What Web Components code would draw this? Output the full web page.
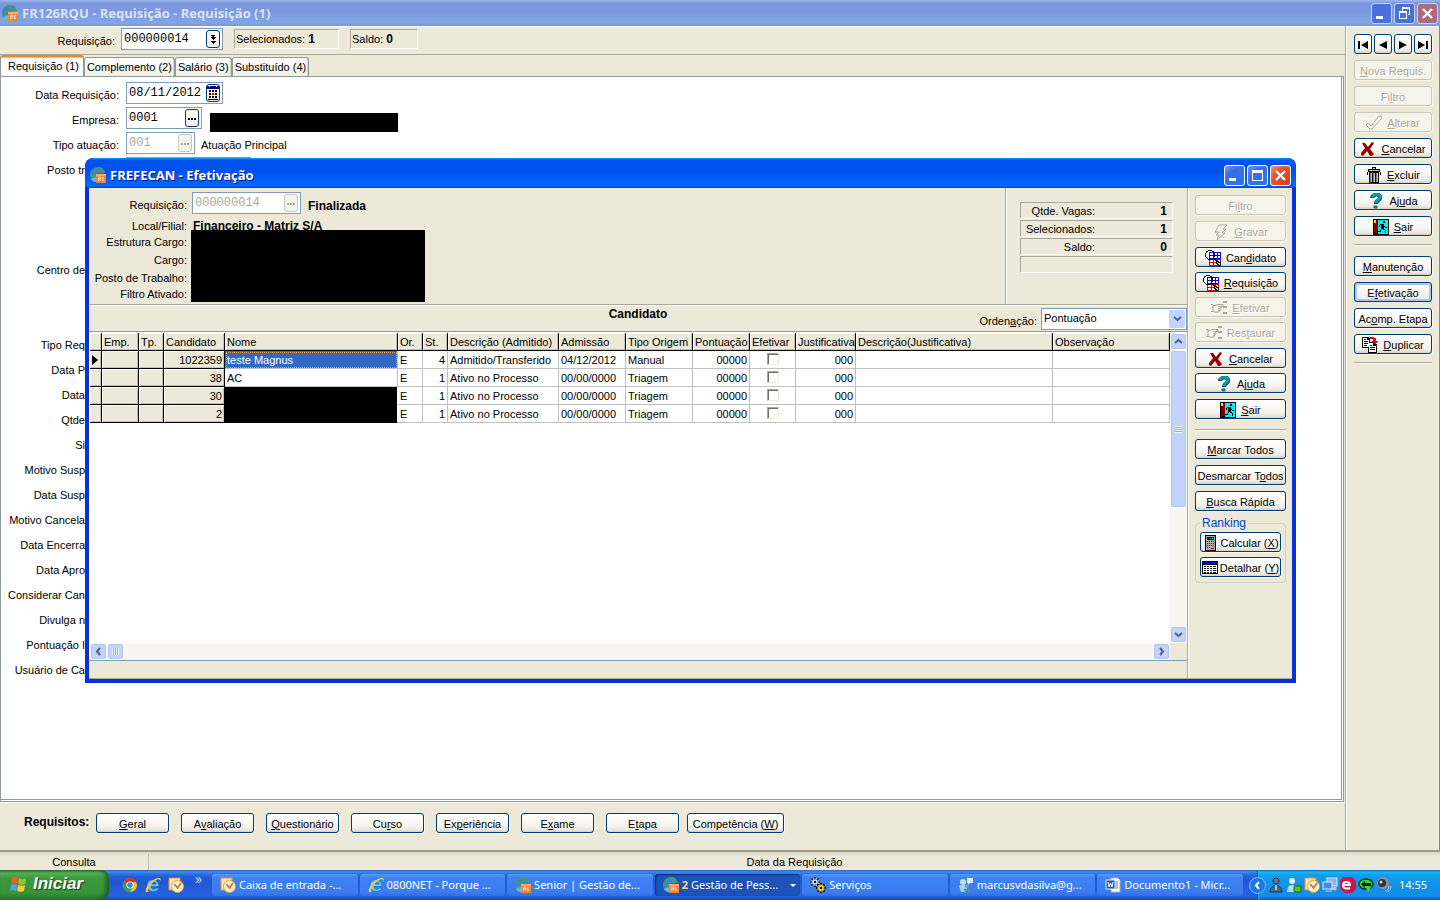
<!DOCTYPE html>
<html lang="pt-BR">
<head>
<meta charset="utf-8">
<title>FR126RQU - Requisição</title>
<style>
    html, body {
        height: 100%;
    }
    body {
        margin: 0;
        display: flex;
        flex-direction: column;
        overflow: hidden;
        background: #ece9d8;
        color: #000;
        font: 11px/14px "Liberation Sans", Arial, sans-serif;
        --face: #ece9d8;
        --edge: #7f9db9;
        --ui: "Noto Sans", Tahoma, sans-serif;
        --caption: "Open Sans", "Trebuchet MS", sans-serif;
    }
    .workspace {
        flex: 1;
        display: flex;
        min-height: 0;
        border-right: 1px solid #8c8a80;
    }
    .main {
        flex: 1;
        display: flex;
        flex-direction: column;
        min-width: 0;
        border-right: 1px solid #aca899;
    }
</style>
</head>
<body>
    <title-bar caption="FR126RQU - Requisição - Requisição (1)" inactive></title-bar>
    <div class="workspace">
        <div class="main">
            <request-header></request-header>
            <tab-strip></tab-strip>
            <request-form></request-form>
            <requirement-bar></requirement-bar>
        </div>
        <request-actions></request-actions>
    </div>
    <status-line></status-line>
    <task-bar></task-bar>
    <hiring-window></hiring-window>

<script>
const ICONS = {
    senior: `<svg viewBox="0 0 16 16"><path d="M0 8C0 3 4 0 8 0c4 0 6 2 7 6H6v9C2 14 0 11 0 8z" fill="#3f9c84"/><path d="M0 8c4-4 9-4 15-2l-9 1C4 8 2 9 1 11zM2 3c3-2 8-2 11 0L7 4 1 6z" fill="#4284b8" opacity=".8"/><path d="M1 12l5-2v5c-3 0-4-1-5-3z" fill="#6cb8cc"/><rect x="6" y="7" width="10" height="9" fill="#f08438"/><rect x="6" y="7" width="10" height="2" fill="#fca868"/><path d="M8.500 14v-4h2v2h-2m1 0l1 2M14 10.500h-2V12h1.500v1.500H12" stroke="#ffe2c4" stroke-width=".8" fill="none"/></svg>`,
    check: `<svg viewBox="0 0 16 16"><path d="M0 10l2-2 3 3 8-10h3v2L6 14H4z" fill="#f5f4ea" stroke="#aca899"/></svg>`,
    cross: `<svg viewBox="0 0 16 16"><path d="M2 2h3l3 4 4-5 2 1-4 6 4 5-2 2h-2l-3-5-4 5-2-1v-2l4-5z" fill="#a00000"/><path d="M3 3l5 6 4 5M12 3L4 12" stroke="#700000" stroke-width="1" fill="none"/></svg>`,
    trash: `<svg viewBox="0 0 16 16" shape-rendering="crispEdges"><path d="M6 0h4v2H6zM2 2h12v3H2zM3 5h10v11H3z" fill="#000"/><path d="M7 1h2v1H7zM3 3h10v1H3z" fill="#c0c0c0"/><path d="M4 6h1v9H4zM7 6h1v9H7zM10 6h1v9h-1z" fill="#808080"/><path d="M5 6h1v9H5zM8 6h1v9H8zM11 6h1v9h-1z" fill="#c0c0c0"/><path d="M1 5h1v3H1zM14 5h1v3h-1z" fill="#000"/></svg>`,
    help: `<svg viewBox="0 0 16 16"><path d="M4 5C4 1 13 0 12 5c0 3-4 2-4 6" stroke="#005060" stroke-width="4" fill="none"/><path d="M4 4C5 1 12 0 12 4c0 3-4 3-4 6" stroke="#00a6b4" stroke-width="2.500" fill="none"/><path d="M6 13h3v2H6z" fill="#00a6b4" stroke="#005060" stroke-width=".8"/></svg>`,
    exit: `<svg viewBox="0 0 16 16" shape-rendering="crispEdges"><rect width="16" height="16" fill="#000"/><rect x="5" y="1" width="10" height="14" fill="#00f0f0"/><path d="M1 1h4v12l-4 2z" fill="#800000"/><path d="M1 1h2v3H1z" fill="#ffe000"/><path d="M10 2h2v2h-2zM7 5h4v1H7zM6 6h1v2H6zM8 6h3v4H8zM11 7h1v1h-1zM12 8h2v1h-2zM10 10h2v1h-2zM12 11h1v3h-1zM8 10h1v1H8zM7 11h1v2H7zM5 12h2v1H5z" fill="#000"/></svg>`,
    duplicate: `<svg viewBox="0 0 16 16" shape-rendering="crispEdges"><path d="M0 0h6l2 2v9H0zM6 5h6l3 3v8H6z" fill="#000"/><path d="M1 1h4v2h2v7H1zM7 6h4v3h3v6H7z" fill="#fff"/><path d="M2 2h2v1H2zM2 4h4v1H2zM2 6h4v1H2zM2 8h3v1H2zM8 8h2v1H8zM8 10h5v1H8zM8 12h5v1H8z" fill="#000"/><path d="M8 0h4v1h2v3h2l-3 4-4-4h2V2H8z" fill="#f00000"/></svg>`,
    bolt: `<svg viewBox="0 0 16 16"><path d="M6 1h8l-4 4h3L9 9h3l-8 7 2-5H3l3-3H2z" fill="#f5f4ea" stroke="#aca899"/></svg>`,
    search: `<svg viewBox="0 0 16 16" shape-rendering="crispEdges"><rect x="4" y="2" width="12" height="7" fill="#0000f0"/><rect x="4" y="9" width="12" height="7" fill="#f00000"/><path d="M5 3h3v2H5zM9 3h3v2H9zM13 3h2v2h-2zM5 6h3v2H5zM9 6h3v2H9zM13 6h2v2h-2zM5 10h3v2H5zM9 10h3v2H9zM13 10h2v2h-2zM5 13h3v2H5zM9 13h3v2H9zM13 13h2v2h-2z" fill="#fff"/><path d="M3 0h4v1H3zM1 1h2v1H1zM7 1h2v1H7zM0 3h1v4H0zM9 3h1v4H9zM1 7h1v1H1zM8 7h1v1H8zM3 9h4v1H3zM1 2h1v1H1zM8 2h1v1H8zM2 8h1v1H2zM8 8h3v2H8zM10 10h2v1h-2zM11 11h3v1h2v4h-3v-1h-1v-1h-1z" fill="#000"/><path d="M12 12h1v1h-1zM13 13h2v1h-2zM14 14h1v1h-1z" fill="#e8e060"/></svg>`,
    hand: `<svg viewBox="0 0 16 16"><path d="M0 4.500h2v7H0m2-6h2l2-1h6v2H7m3 0v2H7m2 0v2H7m1 0v1.500H3l-1-1" fill="none" stroke="#aca899"/><path d="M12 1h4v2h-4zM12 6h4v2h-4zM12 12h4v2h-4z" fill="#aca899"/></svg>`,
    calculator: `<svg viewBox="0 0 16 16" shape-rendering="crispEdges"><rect x="3" width="11" height="16" fill="#000"/><rect x="4" y="1" width="9" height="14" fill="#a8a8a8"/><rect x="5" y="2" width="7" height="3" fill="#000"/><path d="M8 3h1v1H8zM10 3h1v1h-1z" fill="#00e0c0"/><path d="M5 6h1v1H5zM7 6h1v1H7zM9 6h1v1H9zM11 6h1v1h-1zM5 8h1v1H5zM7 8h1v1H7zM9 8h1v1H9zM11 8h1v1h-1zM5 10h1v1H5zM7 10h1v1H7zM9 10h1v1H9zM11 10h1v1h-1zM5 12h1v1H5zM7 12h1v1H7z" fill="#303030"/><path d="M9 13h3v1H9z" fill="#e00000"/></svg>`,
    table: `<svg viewBox="0 0 16 16" shape-rendering="crispEdges"><rect y="1" width="16" height="13" fill="#000"/><rect x="1" y="2" width="14" height="2" fill="#0000e0"/><rect x="1" y="5" width="14" height="8" fill="#fff"/><path d="M2 6h2v1H2zM5 6h2v1H5zM8 6h2v1H8zM11 6h3v1h-3zM2 8h2v1H2zM5 8h2v1H5zM8 8h2v1H8zM11 8h3v1h-3zM2 10h2v1H2zM5 10h2v1H5zM8 10h2v1H8zM11 10h3v1h-3zM2 12h2v1H2zM5 12h2v1H5zM8 12h2v1H8zM11 12h3v1h-3z" fill="#202020"/></svg>`,
    first: `<svg viewBox="0 0 12 12"><path d="M1 2h2v8H1zM11 2v8L4 6z"/></svg>`,
    prev: `<svg viewBox="0 0 12 12"><path d="M10 2v8L2 6z"/></svg>`,
    next: `<svg viewBox="0 0 12 12"><path d="M2 2v8l8-4z"/></svg>`,
    last: `<svg viewBox="0 0 12 12"><path d="M9 2h2v8H9zM1 2v8l7-4z"/></svg>`,
    dots: `<svg viewBox="0 0 12 16" shape-rendering="crispEdges"><path d="M2 8h2v2H2zM5 8h2v2H5zM8 8h2v2H8z" fill="currentColor"/></svg>`,
    drop: `<svg viewBox="0 0 12 16" shape-rendering="crispEdges"><path d="M4 4h4v1H4zM5 5h2v1H5zM4 6h5v1H4zM5 7h3v1H5zM6 8h1v1H6zM4 10h5v1H4zM5 11h3v1H5zM6 12h1v1H6z"/></svg>`,
    calendar: `<svg viewBox="0 0 12 16" shape-rendering="crispEdges"><path d="M0 1h12v3H0z" fill="#000080"/><path d="M2 1h1v1H2zM9 1h1v1H9z" fill="#fff"/><path d="M2 5h2v2H2zM5 5h2v2H5zM8 5h2v2H8zM2 8h2v2H2zM8 8h2v2H8zM2 11h2v2H2zM5 11h2v2H5zM8 11h2v2H8zM1 14h10v1H1z" fill="#000"/><path d="M5 8h2v2H5z" fill="#e00000"/></svg>`,
    chrome: `<svg viewBox="0 0 16 16"><circle cx="8" cy="8" r="7" fill="#f5c518"/><path d="M8 8L2 4.500A7 7 0 0 1 14.500 5H8z" fill="#d93025"/><path d="M2 4.500A7 7 0 0 0 8 15l3-5-3-2z" fill="#34a040"/><circle cx="8" cy="8" r="3.600" fill="#fff"/><circle cx="8" cy="8" r="2.700" fill="#3f83e8"/></svg>`,
    ie: `<svg viewBox="0 0 16 16"><path d="M14 9.500H6c0 3 4 3.500 5 1.500h3c-1 5-12 5-12-2.500S14 .500 14 9.500zM6 7h5c0-3-5-3-5 0z" fill="#6cc8fa" stroke="#1560b8" stroke-width=".6" fill-rule="evenodd"/><path d="M1 15C-1 11 8 1 14 1c2 0 2 2 1 3 0-4-6 0-9 4s-4 6-2 6c-1 1-2 1.500-3 1z" fill="#f8c83c"/></svg>`,
    outlook: `<svg viewBox="0 0 16 16"><path d="M1 1h11v12H1z" fill="#fbe3b4" stroke="#e8902c"/><circle cx="9.500" cy="9.500" r="6" fill="#fff0c4" stroke="#e3a23c"/><path d="M6.500 7l3 4 3.500-5" fill="none" stroke="#b8742c" stroke-width="1.500"/></svg>`,
    gears: `<svg viewBox="0 0 16 16"><circle cx="5" cy="5" r="3.800" fill="#e4e4e4"/><path d="M5 0v10M0 5h10M1.500 1.500l7 7M8.500 1.500l-7 7" stroke="#000" stroke-width="1.200"/><circle cx="5" cy="5" r="3" fill="#e4e4e4" stroke="#888"/><circle cx="5" cy="5" r="1.200"/><path d="M11 6v10M6 11h10M7.500 7.500l7 7M14.500 7.500l-7 7" stroke="#000" stroke-width="2"/><circle cx="11" cy="11" r="3.500" fill="#f8e020" stroke="#706000" stroke-width=".8"/><circle cx="11" cy="11" r="1.300"/></svg>`,
    people: `<svg viewBox="0 0 16 16"><path d="M9 1h6v5h-3l-2 2V6H9z" fill="#eaf4fc"/><circle cx="5" cy="5" r="3" fill="#bfe4f0"/><path d="M1 9c2-2 6-2 8 0v6H3z" fill="#a4d4e0"/><circle cx="9" cy="9" r="2" fill="#5fa4ba"/><path d="M6 12h6l-1 4H7z" fill="#4c90aa"/></svg>`,
    word: `<svg viewBox="0 0 16 16"><path d="M6 1h7l2 2v12H6z" fill="#fff" stroke="#9bb0d0"/><path d="M8 5h5M8 7h5M8 9h5M8 11h5" stroke="#5878b0"/><rect x="1" y="3" width="9" height="9" fill="#2e57a8" stroke="#dce8fa"/><path d="M3 5l1 5 1.500-4L7 10l1-5" fill="none" stroke="#fff"/></svg>`,
    flag: `<svg viewBox="0 0 18 18"><path d="M2 3c2-2 4-1 6 0L7 9C5 8 3 8 1 9z" fill="#f0602c"/><path d="M9 3c3 2 5 1 7 0l-1 6c-2 1-4 1-7 0z" fill="#8cc83c"/><path d="M1 10c2-1 4-1 6 0l-1 6c-2-1-4-1-6 0z" fill="#5c9cf4"/><path d="M8 10c3 1 5 1 7 0l-1 6c-2 1-4 1-7 0z" fill="#fccc30"/></svg>`,
    person: `<svg viewBox="0 0 16 16"><circle cx="8" cy="4" r="3" fill="#5a7894" stroke="#203850"/><path d="M2 15c0-4 3-6 6-7 3 1 6 3 6 7z" fill="#46688c" stroke="#203850"/><path d="M7 8h2v5H7z" fill="#b0c4d8"/></svg>`,
    online: `<svg viewBox="0 0 16 16"><circle cx="6" cy="4" r="3" fill="#e8f4fc"/><path d="M1 15c0-6 3-7 5-7s5 1 5 7z" fill="#b4dcf4"/><rect x="8" y="9" width="7" height="6" rx="1" fill="#50c818" stroke="#186808"/></svg>`,
    network: `<svg viewBox="0 0 16 16"><rect x="5" y="1" width="10" height="8" fill="#80b4f0" stroke="#dceafa"/><rect x="1" y="5" width="9" height="7" fill="#4888e0" stroke="#dceafa"/><path d="M3 14h7M8 12l6-2v3z" stroke="#c0c8d4" fill="#c0c8d4"/></svg>`,
    antivirus: `<svg viewBox="0 0 16 16"><path d="M3 0h9l4 4v8l-4 4H5l-5-4V4z" fill="#c81850"/><path d="M3 8h7c0-4-7-4-7 0s4 4 7 3" stroke="#fff" stroke-width="2" fill="none"/></svg>`,
    sync: `<svg viewBox="0 0 16 16"><ellipse cx="8" cy="7" rx="7" ry="5" fill="#38d838" stroke="#083808" stroke-width="1.500"/><path d="M3 7l4-3v2h6v3H7v2z" fill="#082808"/><path d="M8 10h5l-3 6z" fill="#38d838"/></svg>`,
    volume: `<svg viewBox="0 0 16 16"><circle cx="7" cy="6" r="6" fill="#8c9098"/><circle cx="6" cy="6" r="4" fill="#303438"/><circle cx="5" cy="5" r="1.500" fill="#d0d4d8"/><path d="M11 15c3-1 4-3 4-6M9 14c2 0 4-2 4-5" stroke="#a8c8f4" fill="none"/></svg>`,
    min: `<svg viewBox="0 0 19 19"><path d="M4 12h7v3H4z" fill="#fff"/></svg>`,
    max: `<svg viewBox="0 0 19 19"><path d="M4 4h11v11H4zm1 3v7h9V7z" fill="#fff" fill-rule="evenodd"/></svg>`,
    restore: `<svg viewBox="0 0 19 19"><path d="M7 3h8v8h-2v-1h1V5H8v2H7zM4 7h8v8H4zm1 2v5h6V9z" fill="#fff" fill-rule="evenodd"/></svg>`,
    close: `<svg viewBox="0 0 19 19"><path d="M5 5l9 9M14 5l-9 9" stroke="#fff" stroke-width="2.400"/></svg>`,
    up: `<svg viewBox="0 0 9 9"><path d="M1 6l3.500-3L8 6" stroke="#4d6185" stroke-width="2" fill="none"/></svg>`,
    down: `<svg viewBox="0 0 9 9"><path d="M1 3l3.500 3L8 3" stroke="#4d6185" stroke-width="2" fill="none"/></svg>`,
    left: `<svg viewBox="0 0 9 9"><path d="M6 1L3 4.500 6 8" stroke="#4d6185" stroke-width="2" fill="none"/></svg>`,
    right: `<svg viewBox="0 0 9 9"><path d="M3 1l3 3.500L3 8" stroke="#4d6185" stroke-width="2" fill="none"/></svg>`
};

// every element renders its own markup once
class View extends HTMLElement {
    constructor() {
        super();
        this.attachShadow({mode: "open"});
    }
    connectedCallback() {
        this.shadowRoot.innerHTML = this.render();
    }
}

class XpIcon extends View {
    render() {
        return `
        <style>
            :host { display: block; flex: none; width: 16px; height: 16px; }
            svg { display: block; width: 100%; height: 100%; }
        </style>
        ${ICONS[this.getAttribute("name")]}`;
    }
}
customElements.define("xp-icon", XpIcon);

class XpButton extends View {
    render() {
        const icon = this.getAttribute("icon");
        const label = this.getAttribute("label");
        return `
        <style>
            :host { display: block; min-width: 0; }
            button {
                display: flex;
                align-items: center;
                justify-content: center;
                gap: var(--icon-gap, 5px);
                width: 100%;
                height: 20px;
                padding: 1px 0 0;
                box-sizing: border-box;
                border: 1px solid #003c74;
                border-radius: 3px;
                background: linear-gradient(#fff, #f6f5f0 60%, #ecebe5 85%, #d6d0c5);
                box-shadow: 1px 1px 0 #f8f6ee;
                font: inherit;
                color: #000;
                white-space: nowrap;
            }
            button:disabled {
                border-color: #c9c7ba;
                background: #f5f4ea;
                color: #aca899;
                text-shadow: 1px 1px 0 #fff;
            }
            :host([current]) button {
                box-shadow: inset 0 0 0 2px #a9c3f5;
            }
            :host([glyph]) xp-icon { width: 12px; height: 12px; }
        </style>
        <button type="button" ${this.hasAttribute("disabled") ? "disabled" : ""} ${label ? `aria-label="${label}"` : ""}>
            ${icon ? `<xp-icon name="${icon}"></xp-icon>` : ""}
            ${label ? "" : "<span><slot></slot></span>"}
        </button>`;
    }
}
customElements.define("xp-button", XpButton);

// text box with a small picker button at its right end
class XpField extends View {
    render() {
        const off = this.hasAttribute("disabled") ? "disabled" : "";
        return `
        <style>
            :host { display: block; }
            .box {
                display: flex;
                align-items: center;
                height: 22px;
                box-sizing: border-box;
                padding: 0 2px;
                border: 1px solid var(--edge);
                background: #fff;
            }
            input {
                flex: 1;
                min-width: 0;
                height: 16px;
                padding: 0;
                border: 0;
                background: none;
                color: #000;
                font: 12px/16px "Liberation Mono", "Courier New", monospace;
            }
            input:disabled { color: #aca899; }
            button {
                width: 14px;
                height: 18px;
                padding: 0;
                border: 1px solid #003c74;
                border-radius: 3px;
                background: linear-gradient(#fff, #ecebe5);
                color: #000;
            }
            button:disabled { border-color: #c9c7ba; background: #f5f4ea; color: #aca899; }
            xp-icon { width: 12px; height: 16px; }
        </style>
        <div class="box">
            <input type="text" value="${this.getAttribute("value") || ""}" aria-label="${this.getAttribute("label")}" ${off}>
            <button type="button" aria-label="Pesquisar" ${off}><xp-icon name="${this.getAttribute("picker") || "dots"}"></xp-icon></button>
        </div>`;
    }
}
customElements.define("xp-field", XpField);

class TitleBar extends View {
    render() {
        const inactive = this.hasAttribute("inactive");
        return `
        <style>
            :host {
                display: flex;
                align-items: center;
                gap: 4px;
                height: 26px;
                flex: none;
                box-sizing: border-box;
                padding: 0 2px;
                background: linear-gradient(#0997ff 0, #0053ee 8%, #0050ee 40%, #0066ff 88%, #0066ff 93%, #003dd7);
                color: #fff;
            }
            :host(:not([inactive])) {
                height: 30px;
                padding: 4px 5px 0;
                border-radius: 7px 7px 0 0;
                text-shadow: 1px 1px 0 #0f1089;
            }
            :host([inactive]) {
                background: linear-gradient(#9db9eb 0, #7a96df 12%, #7b98e0 40%, #82a5e4 88%, #7994dc);
                color: #d8e4f8;
            }
            h1 {
                flex: 1;
                margin: 0;
                font: bold 13px/18px var(--caption);
                white-space: nowrap;
            }
            .buttons { display: flex; gap: 2px; }
            button {
                width: 21px;
                height: 21px;
                padding: 0;
                border: 1px solid #fff;
                border-radius: 3px;
                background: radial-gradient(circle at 80% 80%, #2b75f0, #3a6be8 60%, #7b9df4);
            }
            .close { background: radial-gradient(circle at 80% 80%, #d8401c, #e0532f 60%, #f0a08a); }
            :host([inactive]) button { border-color: #c4d4f4; background: #4a70dc; }
            :host([inactive]) .close { background: #b06a80; }
            button xp-icon { width: 19px; height: 19px; }
        </style>
        <xp-icon name="senior"></xp-icon>
        <h1>${this.getAttribute("caption")}</h1>
        <div class="buttons">
            <button type="button" aria-label="Minimizar"><xp-icon name="min"></xp-icon></button>
            <button type="button" aria-label="Restaurar"><xp-icon name="${inactive ? "restore" : "max"}"></xp-icon></button>
            <button type="button" class="close" aria-label="Fechar"><xp-icon name="close"></xp-icon></button>
        </div>`;
    }
}
customElements.define("title-bar", TitleBar);

class RequestHeader extends View {
    render() {
        return `
        <style>
            :host {
                display: flex;
                align-items: center;
                height: 29px;
                flex: none;
                box-sizing: border-box;
                padding-bottom: 3px;
                border-top: 1px solid #fff;
                border-bottom: 1px solid #aca899;
            }
            .name { width: 115px; padding-top: 3px; margin-right: 6px; text-align: right; }
            xp-field { width: 102px; margin-right: 11px; }
            .sunken {
                box-sizing: border-box;
                width: 105px;
                height: 20px;
                margin-right: 11px;
                padding: 2px 1px;
                border: 1px solid;
                border-color: #aca899 #fff #fff #aca899;
            }
            .short { width: 68px; }
            b { font-size: 12px; }
        </style>
        <span class="name">Requisição:</span>
        <xp-field label="Requisição" value="000000014" picker="drop"></xp-field>
        <div class="sunken">Selecionados: <b>1</b></div>
        <div class="sunken short">Saldo: <b>0</b></div>`;
    }
}
customElements.define("request-header", RequestHeader);

class TabStrip extends View {
    render() {
        return `
        <style>
            :host {
                display: flex;
                align-items: flex-end;
                height: 21px;
                flex: none;
            }
            button {
                height: 19px;
                padding: 0 2px;
                border: 1px solid #919b9c;
                border-bottom: 0;
                border-radius: 3px 3px 0 0;
                background: linear-gradient(#fff, #f0efe6);
                font: inherit;
                color: #000;
                box-shadow: inset -1px 0 0 #d0cec0;
            }
            .on {
                height: 21px;
                padding: 0 4px 2px 7px;
                border-top: 2px solid #e68b2c;
                background: #fcfcfe;
                box-shadow: inset 0 1px 0 #ffc73c;
            }
        </style>
        <button type="button" class="on">Requisição (1)</button>
        <button type="button">Complemento (2)</button>
        <button type="button">Salário (3)</button>
        <button type="button">Substituído (4)</button>`;
    }
}
customElements.define("tab-strip", TabStrip);

const FORM_LABELS = {
    4: "Posto tr", 8: "Centro de", 11: "Tipo Req", 12: "Data P", 13: "Data", 14: "Qtde", 15: "Si",
    16: "Motivo Susp", 17: "Data Susp", 18: "Motivo Cancela", 19: "Data Encerra", 20: "Data Apro",
    21: "Considerar Can", 22: "Divulga n", 23: "Pontuação I", 24: "Usuário de Ca"
};

class RequestForm extends View {
    render() {
        const labels = Object.entries(FORM_LABELS)
            .map(([row, text]) => `<span class="cut" style="grid-row: ${row}">${text}</span>`).join("");
        return `
        <style>
            :host {
                display: grid;
                grid-template-columns: 118px 1fr;
                grid-auto-rows: 25px;
                column-gap: 7px;
                flex: 1;
                min-height: 0;
                box-sizing: border-box;
                padding-top: 5px;
                margin-right: 1px;
                border: 1px solid #919b9c;
                border-right: 3px double #919b9c;
                border-bottom: 3px double #919b9c;
                background: #fff;
            }
            span { line-height: 25px; padding-top: 1px; white-space: nowrap; }
            .name, .cut { grid-column: 1; text-align: right; }
            .cut { padding-right: 34px; }
            .value { grid-column: 2; display: flex; gap: 6px; }
            .date { width: 97px; }
            .company { width: 76px; }
            .kind { width: 69px; }
            .post { width: 125px; }
            .mask { width: 188px; height: 19px; margin: 6px 0 0 2px; background: #000; }
        </style>
        <span class="name">Data Requisição:</span>
        <div class="value"><xp-field class="date" label="Data Requisição" value="08/11/2012" picker="calendar"></xp-field></div>
        <span class="name">Empresa:</span>
        <div class="value"><xp-field class="company" label="Empresa" value="0001"></xp-field><div class="mask"></div></div>
        <span class="name">Tipo atuação:</span>
        <div class="value"><xp-field class="kind" label="Tipo atuação" value="001" disabled></xp-field><span>Atuação Principal</span></div>
        ${labels}
        <div class="value" style="grid-row: 4"><xp-field class="post" label="Posto"></xp-field></div>`;
    }
}
customElements.define("request-form", RequestForm);

class RequirementBar extends View {
    render() {
        return `
        <style>
            :host {
                display: flex;
                align-items: flex-start;
                gap: 8px;
                height: 48px;
                flex: none;
                box-sizing: border-box;
                padding: 10px 24px 0;
                border-top: 1px solid #fff;
            }
            .group { display: flex; gap: 12px; }
            b { width: 60px; font-size: 12px; line-height: 18px; white-space: nowrap; }
            xp-button { width: 73px; }
            .wide { width: 97px; }
        </style>
        <div class="group">
            <b>Requisitos:</b>
            <xp-button><u>G</u>eral</xp-button>
            <xp-button>A<u>v</u>aliação</xp-button>
            <xp-button><u>Q</u>uestionário</xp-button>
            <xp-button>Cu<u>r</u>so</xp-button>
            <xp-button>Ex<u>p</u>eriência</xp-button>
            <xp-button>E<u>x</u>ame</xp-button>
            <xp-button>E<u>t</u>apa</xp-button>
        </div>
        <xp-button class="wide">Competência (<u>W</u>)</xp-button>`;
    }
}
customElements.define("requirement-bar", RequirementBar);

class RequestActions extends View {
    render() {
        return `
        <style>
            :host {
                display: flex;
                flex-direction: column;
                gap: 6px;
                width: 93px;
                flex: none;
                box-sizing: border-box;
                padding: 7px 7px 0 7px;
                border-top: 1px solid #fff;
                border-left: 1px solid #fff;
            }
            .nav { display: grid; grid-template-columns: repeat(4, 1fr); gap: 2px; }
            hr {
                width: 100%;
                height: 2px;
                box-sizing: border-box;
                margin: 2px 0 4px;
                border: solid;
                border-width: 1px 0;
                border-color: #aca899 transparent #fff;
            }
        </style>
        <div class="nav">
            <xp-button glyph icon="first" label="Primeiro"></xp-button>
            <xp-button glyph icon="prev" label="Anterior"></xp-button>
            <xp-button glyph icon="next" label="Próximo"></xp-button>
            <xp-button glyph icon="last" label="Último"></xp-button>
        </div>
        <xp-button disabled><u>N</u>ova Requis.</xp-button>
        <xp-button disabled>Fi<u>l</u>tro</xp-button>
        <xp-button disabled icon="check"><u>A</u>lterar</xp-button>
        <xp-button icon="cross"><u>C</u>ancelar</xp-button>
        <xp-button icon="trash"><u>E</u>xcluir</xp-button>
        <xp-button icon="help">Aj<u>u</u>da</xp-button>
        <xp-button icon="exit"><u>S</u>air</xp-button>
        <hr>
        <xp-button><u>M</u>anutenção</xp-button>
        <xp-button current>E<u>f</u>etivação</xp-button>
        <xp-button>Ac<u>o</u>mp. Etapa</xp-button>
        <xp-button icon="duplicate"><u>D</u>uplicar</xp-button>
        <hr>`;
    }
}
customElements.define("request-actions", RequestActions);

class StatusLine extends View {
    render() {
        return `
        <style>
            :host {
                display: grid;
                grid-template-columns: 148px 1fr;
                height: 20px;
                flex: none;
                box-sizing: border-box;
                padding-top: 2px;
                border-top: 2px solid #9d9a8c;
                background: linear-gradient(#d8d5c5, #ece9d8 4px);
                text-align: center;
                line-height: 16px;
            }
            span + span { border-left: 1px solid #c5c2b2; }
        </style>
        <span>Consulta</span><span>Data da Requisição</span>`;
    }
}
customElements.define("status-line", StatusLine);

class HiringWindow extends View {
    render() {
        return `
        <style>
            :host {
                position: absolute;
                inset: 158px 144px 217px 85px;
                display: flex;
                flex-direction: column;
                border-radius: 8px 8px 0 0;
                background: #0831d9;
                overflow: hidden;
            }
            .body {
                flex: 1;
                display: flex;
                min-height: 0;
                margin: 0 4px 4px;
                background: var(--face);
                border-bottom: 1px solid #aca899;
            }
            .left { flex: 1; display: flex; flex-direction: column; min-width: 0; }
            .top { display: flex; height: 117px; flex: none; box-sizing: border-box; border-bottom: 1px solid #aca899; }
            .bottom { height: 18px; box-sizing: border-box; border-top: 1px solid var(--edge); }
        </style>
        <title-bar caption="FREFECAN - Efetivação"></title-bar>
        <div class="body">
            <div class="left">
                <div class="top">
                    <hiring-summary></hiring-summary>
                    <vacancy-totals></vacancy-totals>
                </div>
                <sort-bar></sort-bar>
                <candidate-grid></candidate-grid>
                <div class="bottom"></div>
            </div>
            <hiring-actions></hiring-actions>
        </div>`;
    }
}
customElements.define("hiring-window", HiringWindow);

class HiringSummary extends View {
    render() {
        return `
        <style>
            :host {
                flex: 1;
                display: grid;
                grid-template-columns: 98px 1fr;
                grid-template-rows: 26px 16px 16px 20px 16px 16px;
                column-gap: 6px;
                align-items: center;
                padding-top: 4px;
                border-right: 1px solid #aca899;
            }
            .name { grid-column: 1; text-align: right; white-space: nowrap; }
            .value { grid-column: 2; display: flex; align-items: center; gap: 7px; align-self: start; }
            b { font-size: 12px; line-height: 16px; white-space: nowrap; }
            xp-field { width: 109px; margin-left: -1px; }
            .value b { padding-top: 5px; }
            .mask {
                grid-column: 2;
                grid-row: 3 / 7;
                align-self: stretch;
                width: 234px;
                margin: -4px 0 0 -2px;
                background: #000;
            }
        </style>
        <span class="name">Requisição:</span>
        <div class="value"><xp-field label="Requisição" value="000000014" disabled></xp-field><b>Finalizada</b></div>
        <span class="name">Local/Filial:</span><b>Financeiro - Matriz S/A</b>
        <span class="name">Estrutura Cargo:</span>
        <span class="name">Cargo:</span>
        <span class="name">Posto de Trabalho:</span>
        <span class="name">Filtro Ativado:</span>
        <div class="mask"></div>`;
    }
}
customElements.define("hiring-summary", HiringSummary);

class VacancyTotals extends View {
    render() {
        return `
        <style>
            :host { display: block; width: 153px; flex: none; padding: 14px 14px 0 13px; border-left: 1px solid #fff; }
            dl { display: grid; grid-auto-rows: 17px; gap: 1px; margin: 0; }
            div {
                display: flex;
                box-sizing: border-box;
                padding: 0 5px 0 0;
                border: 1px solid;
                border-color: #aca899 #fff #fff #aca899;
                line-height: 16px;
            }
            dt { width: 74px; text-align: right; }
            dd { flex: 1; margin: 0; text-align: right; font-size: 12px; font-weight: bold; }
        </style>
        <dl>
            <div><dt>Qtde. Vagas:</dt><dd>1</dd></div>
            <div><dt>Selecionados:</dt><dd>1</dd></div>
            <div><dt>Saldo:</dt><dd>0</dd></div>
            <div></div>
        </dl>`;
    }
}
customElements.define("vacancy-totals", VacancyTotals);

class SortBar extends View {
    render() {
        return `
        <style>
            :host {
                display: grid;
                grid-template-columns: 1fr auto 1fr;
                height: 26px;
                flex: none;
                box-sizing: border-box;
                border-top: 1px solid #fff;
            }
            h2 { grid-column: 2; margin: 0; font-size: 12px; line-height: 16px; }
            .sort { display: flex; align-items: center; justify-content: flex-end; gap: 4px; }
            label { padding-top: 4px; }
            .select { display: grid; width: 146px; }
            .select > * { grid-area: 1 / 1; }
            select {
                appearance: none;
                width: 100%;
                height: 22px;
                padding: 0 2px 2px;
                border: 1px solid var(--edge);
                border-radius: 0;
                background: #fff;
                font: inherit;
                color: #000;
            }
            .arrow {
                justify-self: end;
                align-self: center;
                display: grid;
                place-items: center;
                width: 16px;
                height: 18px;
                margin-right: 2px;
                border-radius: 2px;
                background: #c2d3fc;
                pointer-events: none;
            }
            .arrow xp-icon { width: 9px; height: 9px; }
        </style>
        <h2>Candidato</h2>
        <div class="sort">
            <label for="sort">Orden<u>a</u>ção:</label>
            <div class="select">
                <select id="sort"><option>Pontuação</option></select>
                <span class="arrow"><xp-icon name="down"></xp-icon></span>
            </div>
        </div>`;
    }
}
customElements.define("sort-bar", SortBar);

const COLUMNS = [
    ["", 12], ["Emp.", 37], ["Tp.", 25], ["Candidato", 61], ["Nome", 173], ["Or.", 25], ["St.", 25],
    ["Descrição (Admitido)", 111], ["Admissão", 67], ["Tipo Origem", 67], ["Pontuação", 57],
    ["Efetivar", 46], ["Justificativa", 60], ["Descrição(Justificativa)", 197], ["Observação", 0]
];

const CANDIDATES = [
    {id: "1022359", name: "teste Magnus", state: 4, status: "Admitido/Transferido", date: "04/12/2012", origin: "Manual"},
    {id: "38", name: "AC", state: 1, status: "Ativo no Processo", date: "00/00/0000", origin: "Triagem"},
    {id: "30", masked: 2, state: 1, status: "Ativo no Processo", date: "00/00/0000", origin: "Triagem"},
    {id: "2", state: 1, status: "Ativo no Processo", date: "00/00/0000", origin: "Triagem"}
];

class CandidateGrid extends View {
    row(item, index) {
        let name = "";
        if (item.masked) name = `<td class="mask" rowspan="${item.masked}"></td>`;
        else if (item.name) name = `<td class="${index ? "" : "selected"}">${item.name}</td>`;
        return `
        <tr>
            <td class="fixed">${index ? "" : `<span class="pointer"></span>`}</td>
            <td class="fixed"></td>
            <td class="fixed"></td>
            <td class="fixed num">${item.id}</td>
            ${name}
            <td>E</td>
            <td class="num">${item.state}</td>
            <td>${item.status}</td>
            <td>${item.date}</td>
            <td>${item.origin}</td>
            <td class="num">00000</td>
            <td class="check"><input type="checkbox" aria-label="Efetivar ${item.id}"></td>
            <td class="num">000</td>
            <td></td>
            <td></td>
        </tr>`;
    }
    render() {
        return `
        <style>
            :host {
                flex: 1;
                display: grid;
                grid-template-columns: 1fr 17px;
                grid-template-rows: 1fr 17px;
                min-height: 0;
                padding: 1px 0 0 1px;
                border-top: 1px solid var(--edge);
                background: #fff;
            }
            .rows { overflow: hidden; }
            table { width: 100%; table-layout: fixed; border-collapse: separate; border-spacing: 0; }
            th, td {
                height: 18px;
                box-sizing: border-box;
                padding: 0 2px;
                border: solid #c0c0c0;
                border-width: 0 1px 1px 0;
                line-height: 16px;
                text-align: left;
                font-weight: normal;
                white-space: nowrap;
                overflow: hidden;
            }
            th, .fixed {
                border-color: #000;
                background: var(--face);
                box-shadow: inset 1px 1px 0 #fff, inset -1px -1px 0 #c5c2b2;
            }
            .num { text-align: right; }
            .selected { background: #316ac5; color: #fff; outline: 1px dotted #e0a050; outline-offset: -2px; }
            .mask { background: #000 padding-box; border-color: #fff #fff #000; }
            .pointer {
                display: block;
                width: 0;
                border: solid transparent;
                border-width: 5px 0 5px 6px;
                border-left-color: #000;
            }
            .check { padding-bottom: 2px; text-align: center; line-height: 0; }
            input {
                appearance: none;
                width: 12px;
                height: 12px;
                margin: 0;
                border: 1px solid;
                border-color: #aca899 #ece9d8 #ece9d8 #aca899;
                box-shadow: inset 1px 1px 0 #716f64;
            }
            .bar { display: flex; background: #f6f5ef; }
            .down { flex-direction: column; }
            .corner { background: var(--face); }
            .stop, .thumb {
                display: grid;
                place-items: center;
                flex: none;
                box-sizing: border-box;
                width: 17px;
                height: 17px;
                border: 1px solid #fff;
                border-radius: 3px;
                background: #c2d3fc;
                box-shadow: inset 0 0 0 1px #b0c4f4;
            }
            .stop xp-icon { width: 9px; height: 9px; }
            .down .thumb { height: 158px; }
            .grip {
                width: 7px;
                height: 7px;
                background: repeating-linear-gradient(#eef4fe 0 1px, #8cb0f8 1px 2px);
            }
            .across .grip { background: repeating-linear-gradient(90deg, #eef4fe 0 1px, #8cb0f8 1px 2px); }
            .room { flex: 1; }
        </style>
        <div class="rows">
            <table>
                <colgroup>${COLUMNS.map(([, width]) => `<col${width ? ` style="width: ${width}px"` : ""}>`).join("")}</colgroup>
                <thead><tr>${COLUMNS.map(([text]) => `<th>${text}</th>`).join("")}</tr></thead>
                <tbody>${CANDIDATES.map(this.row).join("")}</tbody>
            </table>
        </div>
        <div class="bar down">
            <span class="stop"><xp-icon name="up"></xp-icon></span>
            <span class="thumb"><i class="grip"></i></span>
            <span class="room"></span>
            <span class="stop"><xp-icon name="down"></xp-icon></span>
        </div>
        <div class="bar across">
            <span class="stop"><xp-icon name="left"></xp-icon></span>
            <span class="thumb"><i class="grip"></i></span>
            <span class="room"></span>
            <span class="stop"><xp-icon name="right"></xp-icon></span>
        </div>
        <div class="corner"></div>`;
    }
}
customElements.define("candidate-grid", CandidateGrid);

class HiringActions extends View {
    render() {
        return `
        <style>
            :host {
                display: flex;
                flex-direction: column;
                gap: 6px;
                width: 105px;
                flex: none;
                box-sizing: border-box;
                padding: 7px 6px 0 7px;
                border-left: 1px solid #aca899;
                box-shadow: inset 1px 0 0 #fff;
            }
            .group { display: grid; gap: 5px; }
            hr {
                width: 100%;
                height: 2px;
                box-sizing: border-box;
                margin: 4px 0 2px;
                border: solid;
                border-width: 1px 0;
                border-color: #aca899 transparent #fff;
            }
            fieldset {
                --icon-gap: 2px;
                display: grid;
                gap: 5px;
                margin: 0;
                padding: 3px 4px 5px;
                border: 1px solid #d0d0bf;
                border-radius: 4px;
            }
            legend { padding: 0 2px; color: #0046d5; font-size: 12px; line-height: 12px; }
        </style>
        <xp-button disabled>Fi<u>l</u>tro</xp-button>
        <xp-button disabled icon="bolt"><u>G</u>ravar</xp-button>
        <div class="group">
            <xp-button icon="search">Can<u>d</u>idato</xp-button>
            <xp-button icon="search"><u>R</u>equisição</xp-button>
            <xp-button disabled icon="hand"><u>E</u>fetivar</xp-button>
            <xp-button disabled icon="hand">Res<u>t</u>aurar</xp-button>
        </div>
        <div class="group">
            <xp-button icon="cross"><u>C</u>ancelar</xp-button>
            <xp-button icon="help">Aj<u>u</u>da</xp-button>
        </div>
        <xp-button icon="exit"><u>S</u>air</xp-button>
        <hr>
        <xp-button><u>M</u>arcar Todos</xp-button>
        <xp-button>Desmarcar T<u>o</u>dos</xp-button>
        <xp-button><u>B</u>usca Rápida</xp-button>
        <fieldset>
            <legend>Ranking</legend>
            <xp-button icon="calculator">Calcular (<u>X</u>)</xp-button>
            <xp-button icon="table">Detalhar (<u>Y</u>)</xp-button>
        </fieldset>`;
    }
}
customElements.define("hiring-actions", HiringActions);

const TASKS = [
    ["outlook", "Caixa de entrada -..."], ["ie", "0800NET - Porque ..."], ["senior", "Senior | Gestão de..."],
    ["senior", "Gestão de Pess...", 2], ["gears", "Serviços"], ["people", "marcusvdasilva@g..."],
    ["word", "Documento1 - Micr..."]
];

class TaskBar extends View {
    render() {
        const tasks = TASKS.map(([icon, text, count]) => `
            <button type="button" class="task ${count ? "on" : ""}">
                <xp-icon name="${icon}"></xp-icon>${count ? `<b>${count}</b>` : ""}<span>${text}</span>${count ? `<i class="more"></i>` : ""}
            </button>`).join("");
        const tray = ["person", "online", "outlook", "network", "antivirus", "sync", "volume"]
            .map(name => `<xp-icon name="${name}"></xp-icon>`).join("");
        return `
        <style>
            :host {
                display: flex;
                height: 30px;
                flex: none;
                background: linear-gradient(#3165c4 0, #3d8aea 2px, #2b71e0 4px, #235bd6 7px, #2157d6 12px, #2562df 26px, #1d4ec0 29px, #1941a5);
                color: #fff;
                font-family: var(--ui);
            }
            button { font: inherit; color: #fff; border: 0; }
            .start {
                display: flex;
                align-items: center;
                gap: 5px;
                width: 109px;
                flex: none;
                padding: 0 0 2px 10px;
                border-radius: 0 8px 10px 0;
                background: linear-gradient(#2f7d2f, #5cb15a 3px, #3c983b 8px, #37953a 22px, #2c7c2d);
                box-shadow: inset -3px 0 4px #1c5c20;
                font: italic bold 17px/24px "Liberation Sans", Arial, sans-serif;
                text-shadow: 1px 1px 1px #1c3c1c;
            }
            .start xp-icon { width: 18px; height: 18px; }
            .quick { display: flex; align-items: center; gap: 7px; width: 90px; padding: 0 0 0 13px; }
            .quick i { align-self: flex-start; font: 14px/18px var(--ui); color: #c4dcfc; padding: 0 0 0 4px; }
            .tasks { flex: 1; display: grid; grid-template-columns: repeat(7, 1fr); gap: 2px; min-width: 0; padding: 4px 14px 4px 0; }
            .task {
                display: flex;
                align-items: center;
                gap: 3px;
                min-width: 0;
                padding: 0 8px;
                border-radius: 3px;
                background: linear-gradient(#5a96f8, #3c81f3 4px, #3c7cf0 18px, #3070e4);
                white-space: nowrap;
                overflow: hidden;
            }
            .on { background: #1e52b7; box-shadow: inset 1px 1px 2px #10307c; }
            .on b { color: #ffd080; }
            .more { margin-left: auto; margin-right: -4px; border: 3px solid transparent; border-top-color: #fff; border-bottom: 0; }
            .tray {
                display: flex;
                align-items: center;
                gap: 2px;
                padding-right: 13px;
                border-left: 1px solid #1042af;
                background: linear-gradient(#0c59b9, #18b9f0 2px, #139ee9 5px, #118ee9 20px, #1290e8 26px, #095bc9);
                box-shadow: inset 1px 0 0 #18b9f0;
            }
            .expand {
                width: 17px;
                height: 17px;
                display: grid;
                place-items: center;
                margin-left: -9px;
                padding: 0;
                border: 1px solid #7cc4fc;
                border-radius: 50%;
                background: #1a78e0;
            }
            .expand svg { width: 9px; height: 9px; }
            time { padding-left: 5px; }
        </style>
        <button type="button" class="start"><xp-icon name="flag"></xp-icon>Iniciar</button>
        <div class="quick">
            <xp-icon name="chrome"></xp-icon><xp-icon name="ie"></xp-icon><xp-icon name="outlook"></xp-icon><i>»</i>
        </div>
        <div class="tasks">${tasks}</div>
        <div class="tray">
            <button type="button" class="expand" aria-label="Mostrar ícones ocultos"><svg viewBox="0 0 9 9"><path d="M6 1L3 4.500 6 8" stroke="#fff" stroke-width="2" fill="none"/></svg></button>
            ${tray}
            <time>14:55</time>
        </div>`;
    }
}
customElements.define("task-bar", TaskBar);
</script>
</body>
</html>
